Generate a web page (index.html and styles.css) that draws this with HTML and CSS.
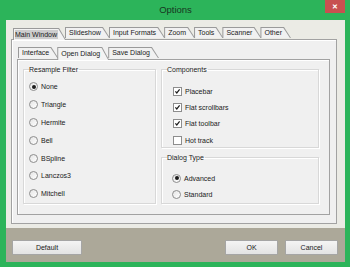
FILE: index.html
```html
<!DOCTYPE html>
<html lang="en">
<head>
  <meta charset="UTF-8">
  <title>Options</title>
  <link rel="stylesheet" href="styles.css">
</head>
<body>
  <div class="window">
    <div class="titlebar">
      <span></span>
      <span class="title">Options</span>
      <span class="close">&#x2715;</span>
    </div>

    <div class="client">
      <div class="sheet">
        <div class="tabs outer-tabs">
          <span class="tab active"><span class="label">Main Window</span></span>
          <span class="tab"><span class="label">Slideshow</span></span>
          <span class="tab"><span class="label">Input Formats</span></span>
          <span class="tab"><span class="label">Zoom</span></span>
          <span class="tab"><span class="label">Tools</span></span>
          <span class="tab"><span class="label">Scanner</span></span>
          <span class="tab"><span class="label">Other</span></span>
        </div>

        <div class="page outer-page">
          <div class="tabs inner-tabs">
            <span class="tab"><span class="label">Interface</span></span>
            <span class="tab active"><span class="label">Open Dialog</span></span>
            <span class="tab"><span class="label">Save Dialog</span></span>
          </div>

          <div class="page inner-page">
            <fieldset class="group resample">
              <legend>Resample Filter</legend>
              <div class="option"><span class="radio checked"></span>None</div>
              <div class="option"><span class="radio"></span>Triangle</div>
              <div class="option"><span class="radio"></span>Hermite</div>
              <div class="option"><span class="radio"></span>Bell</div>
              <div class="option"><span class="radio"></span>BSpline</div>
              <div class="option"><span class="radio"></span>Lanczos3</div>
              <div class="option"><span class="radio"></span>Mitchell</div>
            </fieldset>

            <div class="right-col">
              <fieldset class="group components">
                <legend>Components</legend>
                <div class="option"><span class="check"><svg viewBox="0 0 9 9"><path d="M1.8 4.4 L3.6 6.4 L7.2 1.9" /></svg></span>Placebar</div>
                <div class="option"><span class="check"><svg viewBox="0 0 9 9"><path d="M1.8 4.4 L3.6 6.4 L7.2 1.9" /></svg></span>Flat scrollbars</div>
                <div class="option"><span class="check"><svg viewBox="0 0 9 9"><path d="M1.8 4.4 L3.6 6.4 L7.2 1.9" /></svg></span>Flat toolbar</div>
                <div class="option"><span class="check"></span>Hot track</div>
              </fieldset>

              <fieldset class="group dialog-type">
                <legend>Dialog Type</legend>
                <div class="option"><span class="radio checked"></span>Advanced</div>
                <div class="option"><span class="radio"></span>Standard</div>
              </fieldset>
            </div>
          </div>
        </div>
      </div>

      <div class="footer">
        <button class="btn wide">Default</button>
        <span class="spacer"></span>
        <button class="btn">OK</button>
        <button class="btn">Cancel</button>
      </div>
    </div>
  </div>
</body>
</html>
```

FILE: styles.css
```css
* {
  box-sizing: border-box;
}
body {
  margin: 0;
  font-family: "Liberation Sans", Arial, sans-serif;
  font-size: 7px;
  color: #1a1a1a;
}
.window {
  width: 350px;
  height: 267px;
  background-color: #2cb45a;
  padding: 0 5px 5px 6px;
  display: flex;
  flex-direction: column;
}
.titlebar {
  height: 20px;
  display: grid;
  grid-template-columns: 1fr auto 1fr;
  align-items: start;
}
.title {
  font-size: 9.5px;
  color: #17361f;
  line-height: 20px;
}
.close {
  justify-self: end;
  width: 20px;
  height: 13px;
  background-color: #c75050;
  color: #fff;
  font-size: 7px;
  font-weight: bold;
  display: flex;
  align-items: center;
  justify-content: center;
}
.client {
  flex: 1;
  display: flex;
  flex-direction: column;
}
.sheet {
  height: 208px;
  background-color: #ebebe5;
  padding: 7px 8px 6px 5px;
  display: flex;
  flex-direction: column;
}

/* tabs */
.tabs {
  display: flex;
  align-items: flex-end;
  position: relative;
  z-index: 1;
}
.outer-tabs {
  height: 12px;
  padding-left: 2px;
}
.tab {
  height: 11px;
  background-color: #9a9a9a;
  padding: 1px 0 0 1px;
  clip-path: polygon(0 0, calc(100% - 7px) 0, 100% 100%, 0 100%);
  margin-right: -1px;
  margin-bottom: 1px;
}
.tab .label {
  display: block;
  height: 100%;
  line-height: 10px;
  padding: 0 9px 0 3px;
  background-color: #f1f1f1;
  clip-path: polygon(0 0, calc(100% - 7.6px) 0, calc(100% - 1px) 100%, 0 100%);
}
.tab.active {
  height: 12px;
  margin-bottom: -1px;
}
.tab.active .label {
  background-color: #f3f3f3;
  line-height: 11px;
}
.outer-tabs .tab.active .label {
  padding-left: 1px;
  background-image: linear-gradient(#cdcdcd, #cdcdcd);
  background-size: calc(100% - 9px) 9px;
  background-position: 1px 1px;
  background-repeat: no-repeat;
}

/* pages */
.page {
  border: 1px solid #a2a2a2;
  box-shadow: inset 1px 1px #fff;
  background-color: #f0f0f0;
}
.outer-page {
  flex: 1;
  padding: 6px 6px 8px 5px;
  display: flex;
  flex-direction: column;
}
.inner-tabs {
  height: 13px;
  padding-left: 1px;
}
.inner-tabs .tab.active {
  height: 13px;
}
.inner-tabs .tab.active .label {
  line-height: 12px;
}
.inner-page {
  flex: 1;
  padding: 5px 10px 10px 5px;
  display: grid;
  grid-template-columns: 133px 1fr;
  gap: 5px;
}

/* group boxes */
.group {
  margin: 0;
  padding: 0;
  border: 1px solid #d8d8d8;
  box-shadow: inset 1px 1px #fff, 1px 1px #fff;
  min-width: 0;
}
.group legend {
  padding: 0 1px 0 0;
  margin-left: 5px;
  line-height: 9px;
}
.option {
  display: flex;
  align-items: center;
  gap: 3px;
  white-space: nowrap;
}
.resample {
  padding-top: 4px;
}
.resample .option {
  height: 17.8px;
  padding-left: 5px;
}
.right-col {
  display: flex;
  flex-direction: column;
  gap: 5px;
}
.components {
  height: 83px;
  padding-top: 9px;
}
.components .option {
  height: 16.3px;
  padding-left: 11px;
}
.dialog-type {
  flex: 1;
  padding-top: 8px;
}
.dialog-type .option {
  height: 16px;
  padding-left: 10px;
}

.radio {
  width: 9px;
  height: 9px;
  border: 1px solid #8d8d8d;
  border-radius: 50%;
  background: linear-gradient(135deg, #e4e4e4, #fff);
  display: flex;
  align-items: center;
  justify-content: center;
}
.radio.checked::after {
  content: "";
  width: 4px;
  height: 4px;
  border-radius: 50%;
  background-color: #1b1b1b;
}
.check {
  width: 9px;
  height: 9px;
  border: 1px solid #8d8d8d;
  background-color: #fff;
  display: flex;
}
.check svg {
  width: 100%;
  height: 100%;
}
.check path {
  fill: none;
  stroke: #1b1b1b;
  stroke-width: 1.5;
}

/* footer */
.footer {
  flex: 1;
  background-color: #aca899;
  display: flex;
  align-items: flex-start;
  gap: 7px;
  padding: 12px 7px 0 6px;
}
.spacer {
  flex: 1;
}
.btn {
  width: 53px;
  height: 15px;
  padding: 0;
  font-family: inherit;
  font-size: 7px;
  color: #1a1a1a;
  border: 1px solid #a5a5a5;
  border-radius: 1px;
  background: linear-gradient(#f4f4f4, #e3e3e3);
}
.btn.wide {
  width: 70px;
}
```
